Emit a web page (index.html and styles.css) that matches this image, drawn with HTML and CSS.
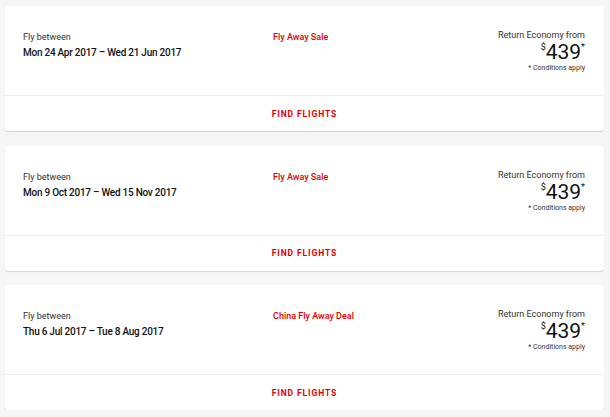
FILE: index.html
```html
<!DOCTYPE html>
<html lang="en">
<head>
    <meta charset="UTF-8">
    <meta name="viewport" content="width=device-width, initial-scale=1.0">
    <title>Fly Away Deals</title>
    <link rel="stylesheet" href="styles.css">
</head>
<body>
    <div class="deals">
        <div class="deal-card">
            <div class="deal-body">
                <div class="deal-dates">
                    <div class="label">Fly between</div>
                    <div class="dates">Mon 24 Apr 2017 – Wed 21 Jun 2017</div>
                </div>
                <div class="deal-name">Fly Away Sale</div>
                <div class="deal-price">
                    <div class="label">Return Economy from</div>
                    <div class="price"><sup>$</sup>439<sup>*</sup></div>
                    <div class="conditions">* Conditions apply</div>
                </div>
            </div>
            <div class="deal-footer">
                <a href="#" class="find-flights">FIND FLIGHTS</a>
            </div>
        </div>

        <div class="deal-card">
            <div class="deal-body">
                <div class="deal-dates">
                    <div class="label">Fly between</div>
                    <div class="dates">Mon 9 Oct 2017 – Wed 15 Nov 2017</div>
                </div>
                <div class="deal-name">Fly Away Sale</div>
                <div class="deal-price">
                    <div class="label">Return Economy from</div>
                    <div class="price"><sup>$</sup>439<sup>*</sup></div>
                    <div class="conditions">* Conditions apply</div>
                </div>
            </div>
            <div class="deal-footer">
                <a href="#" class="find-flights">FIND FLIGHTS</a>
            </div>
        </div>

        <div class="deal-card">
            <div class="deal-body">
                <div class="deal-dates">
                    <div class="label">Fly between</div>
                    <div class="dates">Thu 6 Jul 2017 – Tue 8 Aug 2017</div>
                </div>
                <div class="deal-name">China Fly Away Deal</div>
                <div class="deal-price">
                    <div class="label">Return Economy from</div>
                    <div class="price"><sup>$</sup>439<sup>*</sup></div>
                    <div class="conditions">* Conditions apply</div>
                </div>
            </div>
            <div class="deal-footer">
                <a href="#" class="find-flights">FIND FLIGHTS</a>
            </div>
        </div>
    </div>
</body>
</html>
```

FILE: styles.css
```css
body {
    font-family: Roboto, "Liberation Sans", sans-serif;
    margin: 0;
    background-color: #f6f6f6;
    color: #222;
}
.deals {
    display: flex;
    flex-direction: column;
    gap: 14.5px;
    padding: 6px 6px 0 5px;
}
.deal-card {
    background-color: #fff;
    border-radius: 3px;
    box-shadow: 0 1px 1px rgba(0, 0, 0, 0.15);
}
.deal-body {
    display: grid;
    grid-template-columns: 250px 1fr auto;
    height: 90px;
    box-sizing: border-box;
    padding: 23px 19px 0 18px;
    border-bottom: 1px solid #eee;
}
.label {
    font-size: 9px;
    color: #333;
    line-height: 12px;
}
.deal-dates .label {
    margin-top: 2px;
}
.dates {
    font-size: 10px;
    font-weight: 500;
    color: #111;
    margin-top: 4px;
    letter-spacing: -0.25px;
}
.deal-name {
    font-size: 9px;
    font-weight: 500;
    color: #e40000;
    margin-top: 2px;
    line-height: 12px;
}
.deal-price {
    text-align: right;
}
.price {
    font-size: 21px;
    line-height: 22px;
    color: #111;
}
.price sup {
    font-size: 9px;
    vertical-align: top;
    line-height: 12px;
}
.conditions {
    font-size: 7px;
    color: #333;
    margin-top: 1px;
}
.deal-footer {
    height: 35px;
    display: flex;
    align-items: center;
    justify-content: center;
}
.find-flights {
    color: #e40000;
    font-size: 8.5px;
    font-weight: 700;
    letter-spacing: 0.9px;
    text-decoration: none;
}
```
